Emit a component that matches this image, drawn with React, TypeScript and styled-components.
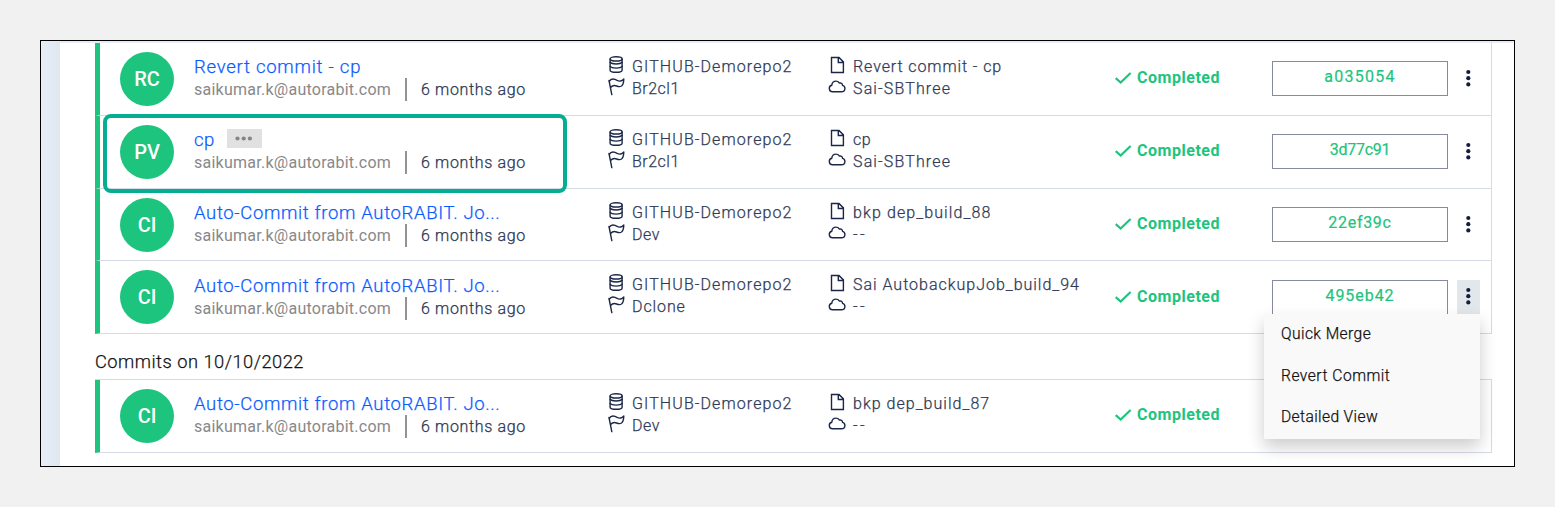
import React from "react";
import styled, { createGlobalStyle, css } from "styled-components";

const GlobalStyle = createGlobalStyle`
  * { box-sizing: border-box; }
  body { margin: 0; background: #f1f1f1; font-family: Roboto, "Liberation Sans", sans-serif; }
`;

const GREEN = "#1dc47d";
const LINE = "#d6dae4";

const Page = styled.div`
  height: 507px;
  padding: 40px;
`;

const Frame = styled.main`
  width: 1475px;
  height: 427px;
  display: flex;
  overflow: hidden;
  border: 1px solid #000;
  background: #fff;
`;

const Gutter = styled.div`
  width: 19px;
  flex: none;
  background: linear-gradient(90deg, #e7eef7, #dfe7f1);
`;

const Content = styled.div`
  flex: 1;
  padding: 0 22px 0 35px;
  border-top: 2px solid #e8ebf8;
`;

const List = styled.section<{ $top?: boolean }>`
  border-right: 1px solid ${LINE};
  ${(p) => p.$top && css`border-top: 1px solid ${LINE};`}
`;

const bookWeight = css`
  font-weight: 300;
  -webkit-text-stroke: 0.25px currentColor;
`;

const Heading = styled.h2`
  height: 45px;
  margin: 0;
  padding-top: 16px;
  font-size: 18.3px;
  ${bookWeight}
  line-height: 24px;
  letter-spacing: 0.49px;
  color: #111;
`;

const Row = styled.article<{ $height: number }>`
  position: relative;
  display: grid;
  grid-template-columns: 74px 414px 220px 287px 157px 176px 32px;
  align-items: start;
  height: ${(p) => p.$height}px;
  padding-left: 20px;
  border-left: 5px solid ${GREEN};
  border-bottom: 1px solid ${LINE};
`;

const Focus = styled.div`
  position: absolute;
  top: -2px;
  left: 3px;
  width: 464px;
  height: 79px;
  border: 4px solid #05ae92;
  border-radius: 8px;
  z-index: 1;
`;

const Avatar = styled.div`
  width: 54px;
  height: 54px;
  margin-top: 9px;
  border-radius: 50%;
  background: ${GREEN};
  color: #fff;
  font-size: 20px;
  font-weight: 500;
  line-height: 55px;
  text-align: center;
`;

const Summary = styled.div<{ $open?: boolean }>`
  padding-top: ${(p) => (p.$open ? 13 : 12)}px;
`;

const TitleLine = styled.div`
  display: flex;
  height: 24px;
  gap: 12px;
`;

const Title = styled.a<{ $track: number }>`
  font-size: 18.5px;
  ${bookWeight}
  line-height: 24px;
  letter-spacing: ${(p) => p.$track}px;
  color: #0b5cff;
  white-space: nowrap;
`;

const More = styled.span`
  display: flex;
  align-items: center;
  justify-content: center;
  width: 35px;
  height: 19px;
  margin-top: 1px;
  background: #e1e1e1;
`;

const Meta = styled.div`
  display: flex;
  height: 22px;
  font-size: 16px;
  line-height: 22px;
  white-space: nowrap;
`;

const Email = styled.span`
  width: 211px;
  font-weight: 400;
  letter-spacing: 0.25px;
  color: #88888b;
`;

const Age = styled.span`
  height: 23px;
  margin-top: -1px;
  padding-left: 14px;
  border-left: 2px solid #939395;
  ${bookWeight}
  line-height: 24px;
  letter-spacing: 0.65px;
  color: #2b3553;
`;

const Details = styled.div`
  padding-top: 13px;
`;

const Detail = styled.div<{ $track: number }>`
  display: flex;
  gap: 7px;
  font-size: 16px;
  ${bookWeight}
  line-height: 22px;
  letter-spacing: ${(p) => p.$track}px;
  color: #303a58;
  white-space: nowrap;
`;

const Status = styled.div<{ $open?: boolean }>`
  display: flex;
  gap: 4px;
  padding-top: ${(p) => (p.$open ? 24 : 23)}px;
  font-size: 16px;
  font-weight: 700;
  line-height: 23px;
  letter-spacing: 0.53px;
  color: ${GREEN};
`;

const Hash = styled.div<{ $track: number; $open?: boolean }>`
  height: 35px;
  margin-top: ${(p) => (p.$open ? 19 : 18)}px;
  border: 1px solid #858a9c;
  font-size: 16px;
  font-weight: 400;
  line-height: ${(p) => (p.$open ? 29 : 30)}px;
  letter-spacing: ${(p) => p.$track}px;
  text-align: center;
  color: ${GREEN};
  -webkit-text-stroke: 0.2px currentColor;
`;

const Actions = styled.div`
  position: relative;
  padding: 19px 0 0 9px;
`;

const Kebab = styled.button<{ $open: boolean }>`
  display: block;
  width: 23px;
  height: 34px;
  padding: 0;
  border: 0;
  background: ${(p) => (p.$open ? "#e1e7ea" : "transparent")};
`;

const Menu = styled.ul`
  position: absolute;
  top: 53px;
  right: 0;
  z-index: 2;
  width: 216px;
  height: 125px;
  margin: 0;
  padding: 0;
  list-style: none;
  background: #f9f9f9;
  box-shadow: 0 8px 16px rgba(0, 0, 0, 0.2);
`;

const MenuItem = styled.li<{ $track: number }>`
  height: 41.5px;
  padding: 9px 0 0 17px;
  font-size: 15.6px;
  ${bookWeight}
  line-height: 22px;
  letter-spacing: ${(p) => p.$track}px;
  color: #111;
`;

const Icon = styled.svg`
  flex: none;
  display: block;
  fill: none;
  stroke: #1c2747;
  stroke-width: 1.4;
  stroke-linejoin: round;
  stroke-linecap: round;
`;

const FileSvg = styled(Icon)`
  stroke-linejoin: miter;
`;

const CheckSvg = styled(Icon)`
  stroke: ${GREEN};
  stroke-width: 2.2;
  stroke-linecap: butt;
  stroke-linejoin: miter;
`;

const DatabaseIcon = () => (
  <Icon width="17" height="18" viewBox="0 0 17 18">
    <ellipse cx="8.1" cy="2.9" rx="6" ry="2.1" />
    <path d="M2.1 2.9v11.3c0 1.3 2.600 2.100 6 2.100s6-.8 6-2.100V2.900" />
    <path d="M2.1 6.300c1 1.300 3.200 1.700 6 1.700s5-.4 6-1.700M2.100 10.400c1 1.300 3.200 1.700 6 1.700s5-.4 6-1.700" />
  </Icon>
);

const FlagIcon = () => (
  <Icon width="17" height="18" viewBox="0 0 17 18">
    <path d="M1 2.500 3.800 16.600M1.100 3.600C2.600 1 4.800.6 7 1.400c2 .8 3.600 2.100 5.600 1.600 1.300-.3 2.300-1 3.200-2-.1 3.400-.4 5.600-2.300 7-1.600 1.100-3.200.7-4.900 0-2-.8-4.200-.6-6 1.500" />
  </Icon>
);

const FileIcon = () => (
  <FileSvg width="18" height="18" viewBox="0 0 18 18">
    <path d="M3.500 1.500h7.500l4.400 4.400v10.600H3.500zM10.300 1.700v4.800h4.900" />
  </FileSvg>
);

const CloudIcon = () => (
  <Icon width="18" height="18" viewBox="0 0 18 18">
    <path d="M4.600 13.800a3.300 3.300 0 0 1-.8-6.500c0-2.900 2.300-4.400 4.500-4.200 1.700.1 2.600.9 3.200 2 1.800-.5 3.100.6 3 2.300 1.400.3 2.400 1.500 2.400 3 0 1.900-1.500 3.400-3.500 3.400z" />
  </Icon>
);

const CheckIcon = () => (
  <CheckSvg width="18" height="22" viewBox="0 0 18 22">
    <path d="M.7 12.100 5.700 16.500 15.600 7" />
  </CheckSvg>
);

const DotsIcon = ({ vertical }: { vertical?: boolean }) =>
  vertical ? (
    <svg width="23" height="34" viewBox="0 0 23 34" fill="#141d3d">
      {[10, 16.2, 22.4].map((y) => <circle key={y} cx="11.3" cy={y} r="2.1" />)}
    </svg>
  ) : (
    <svg width="18" height="5" viewBox="0 0 18 5" fill="#858585">
      {[2.5, 8.7, 14.9].map((x) => <circle key={x} cx={x} cy="2.5" r="2.1" />)}
    </svg>
  );

type Tracked = [string, number];

interface Commit {
  initials: string;
  title: Tracked;
  more?: boolean;
  branch: Tracked;
  label: Tracked;
  org: Tracked;
  hash?: Tracked;
  height: number;
  focused?: boolean;
  open?: boolean;
}

const AUTO: Tracked = ["Auto-Commit from AutoRABIT. Jo...", 0.64];

const recent: Commit[] = [
  { initials: "RC", title: ["Revert commit - cp", 0.75], branch: ["Br2cl1", 0.5], label: ["Revert commit - cp", 0.9], org: ["Sai-SBThree", 1.15], hash: ["a035054", 1.25], height: 73 },
  { initials: "PV", title: ["cp", 0.5], more: true, branch: ["Br2cl1", 0.5], label: ["cp", 0.6], org: ["Sai-SBThree", 1.15], hash: ["3d77c91", -0.3], height: 73, focused: true },
  { initials: "CI", title: AUTO, branch: ["Dev", 0.6], label: ["bkp dep_build_88", 1.1], org: ["--", 2.3], hash: ["22ef39c", 0.7], height: 72 },
  { initials: "CI", title: AUTO, branch: ["Dclone", 0.9], label: ["Sai AutobackupJob_build_94", 0.98], org: ["--", 2.3], hash: ["495eb42", 0.95], height: 73, open: true },
];

const earlier: Commit[] = [
  { initials: "CI", title: AUTO, branch: ["Dev", 0.6], label: ["bkp dep_build_87", 1.02], org: ["--", 2.3], height: 73 },
];

const menuItems: Tracked[] = [["Quick Merge", 0.42], ["Revert Commit", 0.5], ["Detailed View", 0.38]];

const CommitRow = ({ commit }: { commit: Commit }) => (
  <Row $height={commit.height}>
    {commit.focused && <Focus />}
    <Avatar>{commit.initials}</Avatar>
    <Summary $open={commit.open}>
      <TitleLine>
        <Title $track={commit.title[1]}>{commit.title[0]}</Title>
        {commit.more && <More><DotsIcon /></More>}
      </TitleLine>
      <Meta>
        <Email>saikumar.k@autorabit.com</Email>
        <Age>6 months ago</Age>
      </Meta>
    </Summary>
    <Details>
      <Detail $track={1.1}><DatabaseIcon />GITHUB-Demorepo2</Detail>
      <Detail $track={commit.branch[1]}><FlagIcon />{commit.branch[0]}</Detail>
    </Details>
    <Details>
      <Detail $track={commit.label[1]}><FileIcon />{commit.label[0]}</Detail>
      <Detail $track={commit.org[1]}><CloudIcon />{commit.org[0]}</Detail>
    </Details>
    <Status $open={commit.open}><CheckIcon />Completed</Status>
    {commit.hash && (
      <>
        <Hash $track={commit.hash[1]} $open={commit.open}>{commit.hash[0]}</Hash>
        <Actions>
          <Kebab $open={!!commit.open}><DotsIcon vertical /></Kebab>
          {commit.open && (
            <Menu>
              {menuItems.map(([text, track]) => <MenuItem key={text} $track={track}>{text}</MenuItem>)}
            </Menu>
          )}
        </Actions>
      </>
    )}
  </Row>
);

export default function App() {
  return (
    <>
      <GlobalStyle />
      <Page>
        <Frame>
          <Gutter />
          <Content>
            <List>{recent.map((c, i) => <CommitRow key={i} commit={c} />)}</List>
            <Heading>Commits on 10/10/2022</Heading>
            <List $top>{earlier.map((c, i) => <CommitRow key={i} commit={c} />)}</List>
          </Content>
        </Frame>
      </Page>
    </>
  );
}
